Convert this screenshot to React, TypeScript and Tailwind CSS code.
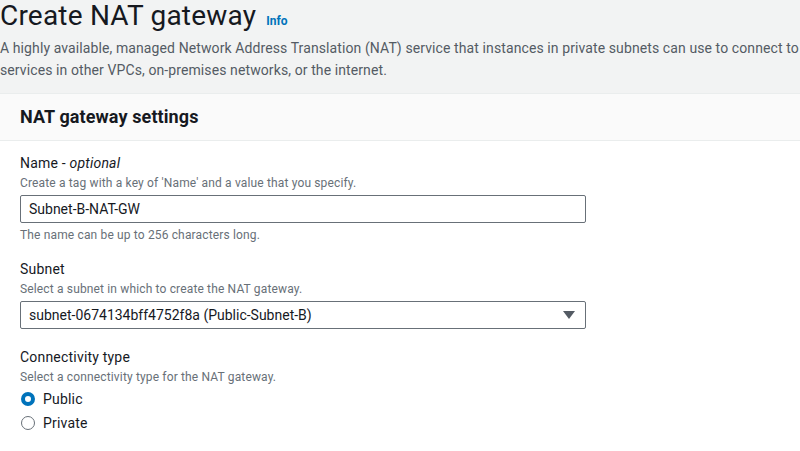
import React, { useState } from 'react';

const font = { fontFamily: 'Roboto, "Liberation Sans", Arial, sans-serif' };

const App: React.FC = () => {
  const [name, setName] = useState('Subnet-B-NAT-GW');
  const [connectivity, setConnectivity] = useState<'public' | 'private'>('public');

  return (
    <div className="min-h-[451px] w-[800px] overflow-hidden bg-[#f2f3f3] text-[#16191f]" style={font}>
      {/* page header */}
      <div className="h-[93px]">
        <h1 className="flex items-baseline text-[28px] leading-[32px] font-normal tracking-[0.2px]">
          Create NAT gateway
          <a href="#" className="ml-[10px] text-[12px] font-bold tracking-normal text-[#0073bb]">Info</a>
        </h1>
        <p className="text-[14px] leading-[22px] tracking-[0.1px] text-[#545b64] whitespace-nowrap">
          A highly available, managed Network Address Translation (NAT) service that instances in private subnets can use to connect to
          <br />
          services in other VPCs, on-premises networks, or the internet.
        </p>
      </div>

      {/* panel */}
      <div className="border-t border-[#eaeded] bg-white">
        <div className="h-[47px] flex items-center px-5 bg-[#fafafa] border-b border-[#eaeded]">
          <h2 className="text-[18px] font-bold leading-[22px] tracking-[0.1px]">NAT gateway settings</h2>
        </div>

        <div className="px-5 pt-3 pb-6">
          {/* name */}
          <div>
            <label className="block text-[14px] leading-[20px] tracking-[0.2px]">
              Name - <i>optional</i>
            </label>
            <p className="mt-0.5 text-[12px] leading-[16px] tracking-[0.15px] text-[#687078]">
              Create a tag with a key of 'Name' and a value that you specify.
            </p>
            <input
              value={name}
              onChange={e => setName(e.target.value)}
              className="mt-1 block w-[566px] h-[28px] px-[8px] border border-[#687078] rounded-[2px] text-[14px] text-[#16191f] outline-none"
              style={font}
            />
            <p className="mt-1 text-[12px] leading-[16px] tracking-[0.15px] text-[#687078]">
              The name can be up to 256 characters long.
            </p>
          </div>

          {/* subnet */}
          <div className="mt-4">
            <label className="block text-[14px] leading-[20px] tracking-[0.2px]">Subnet</label>
            <p className="mt-0.5 text-[12px] leading-[16px] tracking-[0.15px] text-[#687078]">
              Select a subnet in which to create the NAT gateway.
            </p>
            <div className="mt-1 flex items-center justify-between w-[566px] h-[28px] pl-[8px] pr-[10px] border border-[#687078] rounded-[2px] text-[14px]">
              <span>subnet-0674134bff4752f8a (Public-Subnet-B)</span>
              <svg width="12" height="8" viewBox="0 0 12 8">
                <path d="M0 0 H12 L6 8 Z" fill="#545b64" />
              </svg>
            </div>
          </div>

          {/* connectivity */}
          <div className="mt-[18px]">
            <label className="block text-[14px] leading-[20px] tracking-[0.2px]">Connectivity type</label>
            <p className="mt-0.5 text-[12px] leading-[16px] tracking-[0.15px] text-[#687078]">
              Select a connectivity type for the NAT gateway.
            </p>
            <div className="mt-0.5">
              {(['public', 'private'] as const).map(opt => (
                <label
                  key={opt}
                  className="flex items-center h-[24px] text-[14px] tracking-[0.2px] cursor-pointer"
                  onClick={() => setConnectivity(opt)}
                >
                  {connectivity === opt ? (
                    <span className="ml-px w-[14px] h-[14px] rounded-full border-[4px] border-[#0073bb] bg-white" />
                  ) : (
                    <span className="ml-px w-[14px] h-[14px] rounded-full border border-[#687078] bg-white" />
                  )}
                  <span className="ml-[8px]">{opt === 'public' ? 'Public' : 'Private'}</span>
                </label>
              ))}
            </div>
          </div>
        </div>
      </div>
    </div>
  );
};

export default App;
